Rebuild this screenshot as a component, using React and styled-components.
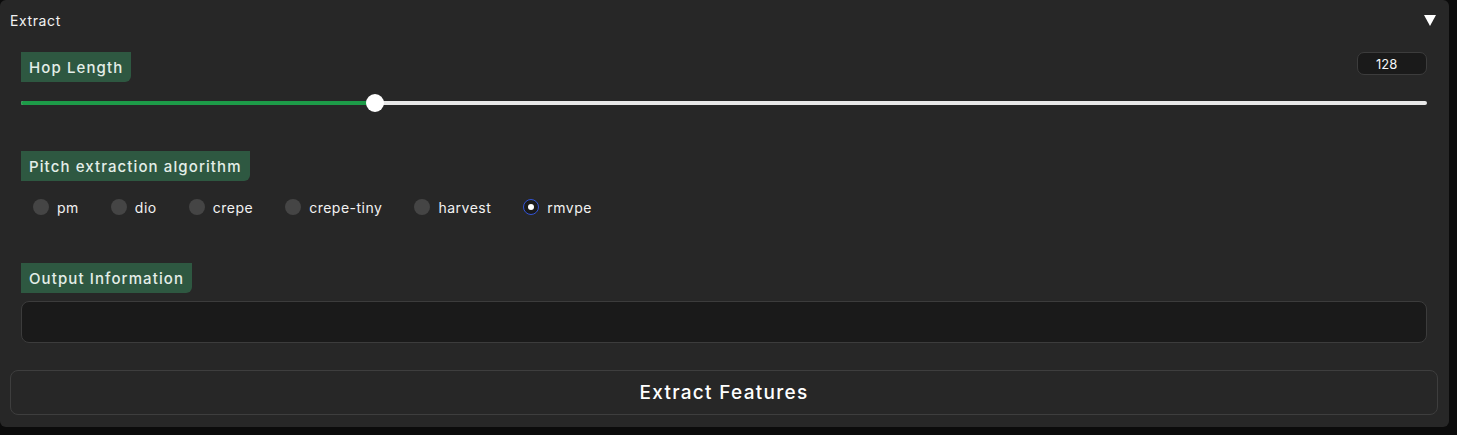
import React from 'react';
import styled, { createGlobalStyle } from 'styled-components';

const GlobalStyle = createGlobalStyle`
  html, body {
    margin: 0;
    padding: 0;
    background: #0b0b0b;
  }
  * {
    box-sizing: border-box;
  }
`;

const Panel = styled.div`
  width: 1449px;
  height: 427px;
  background: #272727;
  border-radius: 6px;
  font-family: Inter, 'Liberation Sans', sans-serif;
  color: #f2f2f2;
  display: flex;
  flex-direction: column;
`;

const Header = styled.div`
  height: 40px;
  padding: 0 13px 0 10px;
  display: flex;
  align-items: center;
  justify-content: space-between;
  font-size: 14px;
  letter-spacing: 0.6px;
`;

const Caret = styled.span`
  width: 0;
  height: 0;
  border-left: 6px solid transparent;
  border-right: 6px solid transparent;
  border-top: 11px solid #ffffff;
`;

const Content = styled.div`
  padding: 12px 22px 0 21px;
  display: flex;
  flex-direction: column;
`;

const Block = styled.div`
  display: flex;
  flex-direction: column;
  margin-bottom: ${({ $mb }) => $mb || 0}px;
`;

const LabelRow = styled.div`
  display: flex;
  justify-content: space-between;
  align-items: flex-start;
`;

const Label = styled.span`
  display: inline-flex;
  align-items: center;
  height: 30px;
  padding: 0 8px;
  background: #2e5841;
  color: #e4eee8;
  font-size: 15px;
  font-weight: 500;
  letter-spacing: 1.1px;
  border-radius: 0 0 6px 0;
  align-self: flex-start;
`;

const NumberBox = styled.div`
  width: 70px;
  height: 23px;
  background: #1a1a1a;
  border: 1px solid #3c3c3c;
  border-radius: 7px;
  font-size: 13px;
  display: flex;
  align-items: center;
  padding-left: 18px;
  color: #f5f5f5;
`;

const SliderArea = styled.div`
  height: 42px;
  display: flex;
  align-items: center;
`;

const Track = styled.div`
  position: relative;
  width: 100%;
  height: 4px;
  border-radius: 2px;
  background: #e8e8e8;
`;

const Fill = styled.div`
  height: 100%;
  border-radius: 2px;
  background: #1d9b48;
`;

const Thumb = styled.div`
  position: absolute;
  top: 50%;
  width: 18px;
  height: 18px;
  margin-top: -9px;
  border-radius: 50%;
  background: #ffffff;
`;

const RadioRow = styled.div`
  display: flex;
  align-items: center;
  gap: 32px;
  margin-top: 16px;
  padding-left: 12px;
  height: 20px;
`;

const RadioItem = styled.label`
  display: flex;
  align-items: center;
  gap: 8px;
  font-size: 14px;
  letter-spacing: 0.5px;
  color: #f2f2f2;
`;

const Dot = styled.span`
  width: 16px;
  height: 16px;
  border-radius: 50%;
  background: ${({ $on }) => ($on ? '#1b1b1b' : '#454545')};
  border: ${({ $on }) => ($on ? '1px solid #3354d6' : 'none')};
  display: flex;
  align-items: center;
  justify-content: center;
  &::after {
    content: '';
    display: ${({ $on }) => ($on ? 'block' : 'none')};
    width: 6px;
    height: 6px;
    border-radius: 50%;
    background: #ffffff;
  }
`;

const OutputBox = styled.div`
  margin-top: 8px;
  height: 42px;
  background: #1a1a1a;
  border: 1px solid #3c3c3c;
  border-radius: 8px;
`;

const ButtonWrap = styled.div`
  padding: 27px 11px 0 10px;
`;

const Button = styled.button`
  width: 100%;
  height: 45px;
  background: #272727;
  border: 1px solid #3e3e3e;
  border-radius: 8px;
  color: #ffffff;
  font-family: Inter, 'Liberation Sans', sans-serif;
  font-size: 19px;
  font-weight: 500;
  letter-spacing: 1.3px;
`;

const algorithms = ['pm', 'dio', 'crepe', 'crepe-tiny', 'harvest', 'rmvpe'];

function HopSlider({ value, min, max }) {
  const frac = (value - min) / (max - min);
  return (
    <SliderArea>
      <Track>
        <Fill style={{ width: `calc((100% - 18px) * ${frac} + 9px)` }} />
        <Thumb style={{ left: `calc((100% - 18px) * ${frac})` }} />
      </Track>
    </SliderArea>
  );
}

export default function App() {
  const selected = 'rmvpe';

  return (
    <>
      <GlobalStyle />
      <Panel>
        <Header>
          <span>Extract</span>
          <Caret />
        </Header>
        <Content>
          <Block $mb={27}>
            <LabelRow>
              <Label>Hop Length</Label>
              <NumberBox>128</NumberBox>
            </LabelRow>
            <HopSlider value={128} min={1} max={512} />
          </Block>

          <Block $mb={46}>
            <Label>Pitch extraction algorithm</Label>
            <RadioRow>
              {algorithms.map((a) => (
                <RadioItem key={a}>
                  <Dot $on={a === selected} />
                  {a}
                </RadioItem>
              ))}
            </RadioRow>
          </Block>

          <Block>
            <Label>Output Information</Label>
            <OutputBox />
          </Block>
        </Content>
        <ButtonWrap>
          <Button>Extract Features</Button>
        </ButtonWrap>
      </Panel>
    </>
  );
}
